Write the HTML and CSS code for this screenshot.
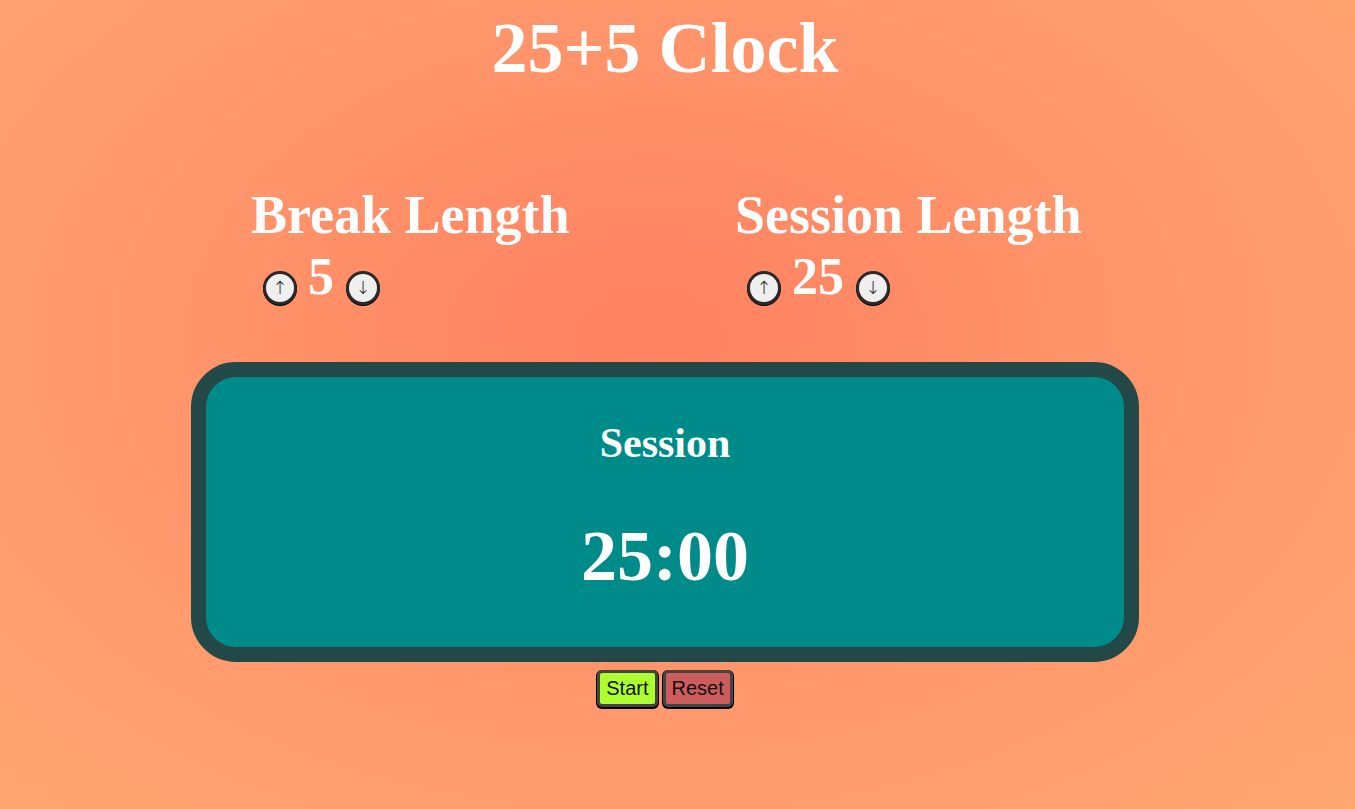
FILE: index.html
```html
<!DOCTYPE html>
<html>
<head>
<meta charset="utf-8">
<title>25+5 Clock</title>
<link rel="stylesheet" href="styles.css">
</head>
<body>
<div class="page">
  <h1 class="title">25+5 Clock</h1>
  <div class="controls">
    <div class="control control-break">
      <h2 class="label">Break Length</h2>
      <div class="row">
        <button class="arrow">↑</button>
        <span class="value">5</span>
        <button class="arrow">↓</button>
      </div>
    </div>
    <div class="control">
      <h2 class="label">Session Length</h2>
      <div class="row">
        <button class="arrow">↑</button>
        <span class="value">25</span>
        <button class="arrow">↓</button>
      </div>
    </div>
  </div>
  <div class="timer">
    <div class="timer-label">Session</div>
    <div class="timer-time">25:00</div>
  </div>
  <div class="actions">
    <button class="btn btn-start">Start</button>
    <button class="btn btn-reset">Reset</button>
  </div>
</div>
</body>
</html>
```
FILE: styles.css
```css
html, body {
  margin: 0;
  padding: 0;
  height: 100%;
}
body {
  background: radial-gradient(ellipse at 48% 42%, #ff8060 0%, #ff946a 45%, #ffa873 100%);
  font-family: "Liberation Serif", "Times New Roman", serif;
  color: #fff;
  overflow: hidden;
}
.page {
  width: 1330px;
  display: flex;
  flex-direction: column;
  align-items: center;
}
.title {
  margin: 12px 0 0 0;
  font-size: 72px;
  line-height: 72px;
  font-weight: bold;
  height: 72px;
}
.controls {
  margin-top: 104px;
  width: 948px;
  padding-left: 120px;
  box-sizing: border-box;
  display: flex;
}
.control-break {
  width: 484px;
}
.label {
  margin: 0 0 0 -60px;
  font-size: 54px;
  line-height: 54px;
  font-weight: bold;
  white-space: nowrap;
}
.row {
  display: flex;
  align-items: flex-end;
  margin-left: -48px;
  margin-top: 10px;
  height: 53px;
}
.value {
  font-size: 52px;
  line-height: 50px;
  font-weight: bold;
  margin: 0 12px 0 11px;
  align-self: flex-start;
}
.arrow {
  width: 34px;
  height: 34px;
  border-radius: 50%;
  border: 3px solid #2a2a2a;
  box-shadow: 0 1px 0 0 #000;
  background: #efefef;
  padding: 0;
  font-family: "DejaVu Sans", sans-serif;
  font-size: 18px;
  font-weight: 300;
  line-height: 26px;
  color: #1a1a1a;
  box-sizing: border-box;
  margin-bottom: 0;
}
.timer {
  margin-top: 57px;
  width: 948px;
  height: 300px;
  box-sizing: border-box;
  border: 15px solid #234848;
  border-radius: 45px;
  background: #008b8b;
  display: flex;
  flex-direction: column;
  align-items: center;
  padding-top: 46px;
}
.timer-label {
  font-size: 42px;
  line-height: 40px;
  font-weight: bold;
}
.timer-time {
  margin-top: 57px;
  font-size: 72px;
  line-height: 72px;
  font-weight: bold;
}
.actions {
  margin-top: 8px;
  display: flex;
  gap: 5px;
}
.btn {
  font-family: "Liberation Sans", Arial, sans-serif;
  font-size: 20px;
  line-height: 23px;
  padding: 4px 6px;
  border: 3px solid #444;
  border-radius: 5px;
  color: #111;
  box-shadow: 0 1px 0 1px #000;
}
.btn-start {
  background: #adff2f;
}
.btn-reset {
  background: #cd5c5c;
}
```
